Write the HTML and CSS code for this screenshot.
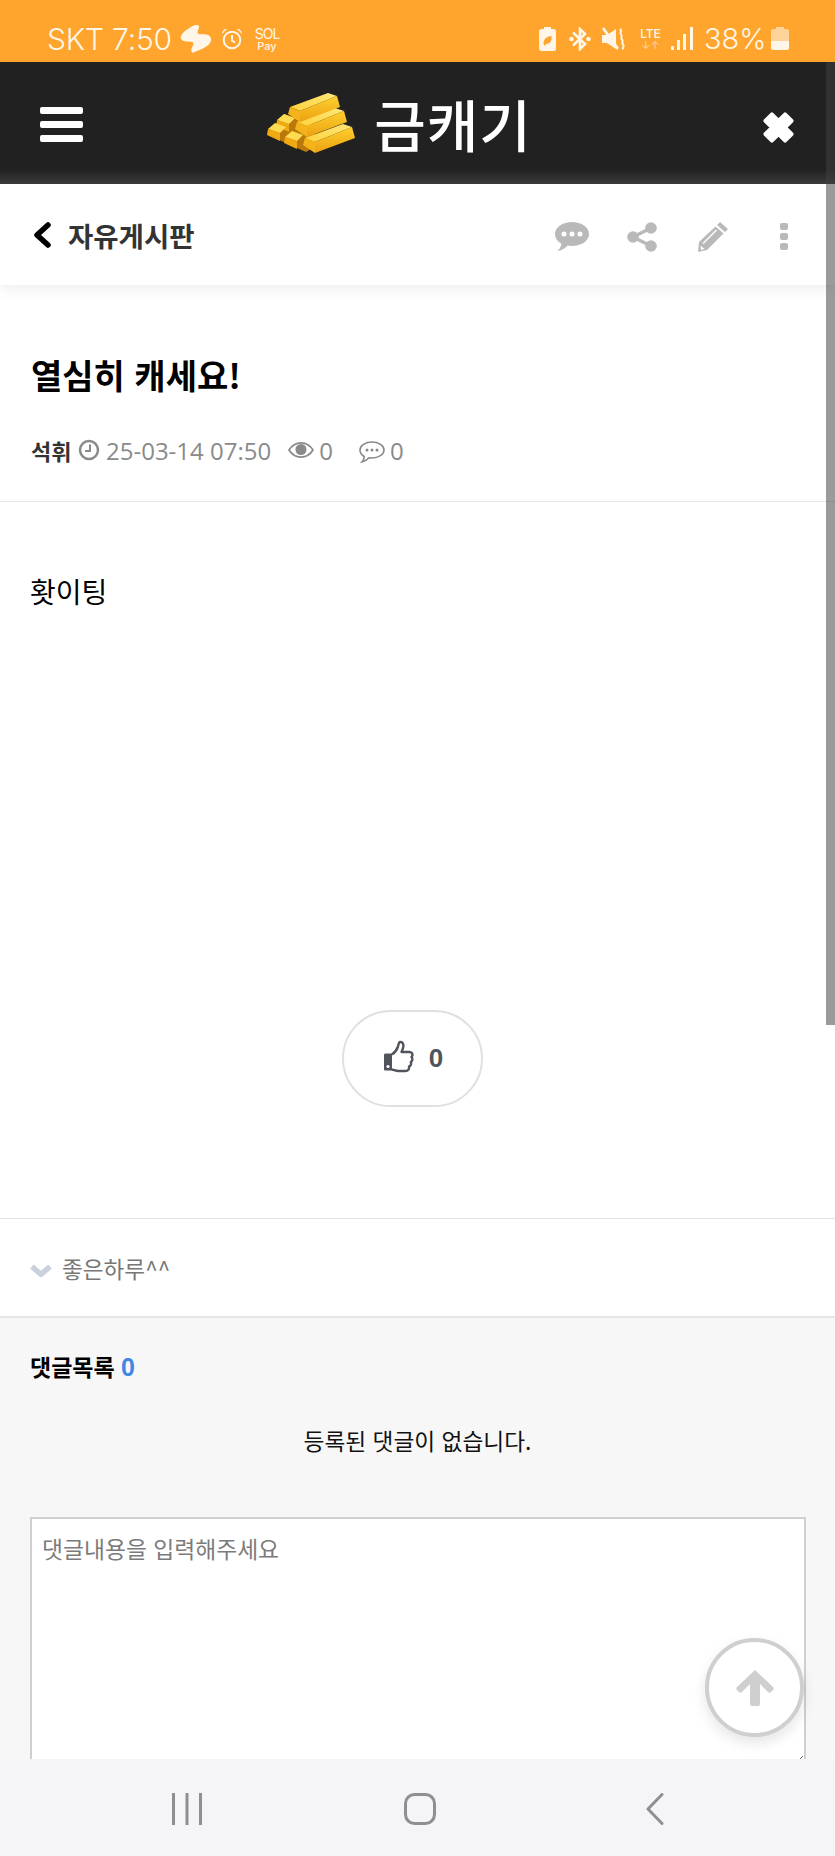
FILE: index.html
```html
<!DOCTYPE html>
<html lang="ko">
<head>
<meta charset="utf-8">
<title>금캐기</title>
<link rel="stylesheet" href="styles.css">
</head>
<body>
<div class="screen">
  <div class="statusbar">
    <div class="status-left">
      <span class="clock">SKT 7:50</span>
      <svg class="ic-swoosh" viewBox="0 0 32 28"><path fill="#fff6e8" d="M15 0C11 2 3 6 1 11c-1 3 1 5 5 5.500 3 .3 6 0 7 1 1 1 0 3-1 5-1 1.500-1 4 0 5 1 .5 3-.5 5-1.500 5-2 13-5 14-10.500.5-3-1-5.500-5-6-3-.4-6 .2-7.500-.5-1.500-1-1-3 0-5 1-2 .5-4-1.500-4.500z"/></svg>
      <svg class="ic-alarm" viewBox="0 0 22 22"><circle cx="11" cy="12" r="8.300" fill="none" stroke="#fff6e8" stroke-width="2"/><path fill="none" stroke="#fff6e8" stroke-width="2" d="M11 7v5.500l3 2"/><path fill="#fff6e8" d="M1 6c0-3 2-5 5-5zM21 6c0-3-2-5-5-5z"/></svg>
      <span class="solpay"><span class="sol">SOL</span><span class="pay">Pay</span></span>
    </div>
    <div class="status-right">
      <svg class="ic-batsave" viewBox="0 0 17 24"><path fill="#fff6e8" d="M5 0h7v2h2.500A2.500 2.500 0 0 1 17 4.500v17a2.500 2.500 0 0 1-2.500 2.500h-12A2.500 2.500 0 0 1 0 21.500v-17A2.500 2.500 0 0 1 2.500 2H5z"/><path fill="#ffa52d" d="M4.500 17c0-5 3-7.500 8-8 .5 5-1.500 8-5.500 8l-1 2zM7 15c1-2 2-3 3.500-3.500C9 12 8 13.500 7 15z"/></svg>
      <svg class="ic-bt" viewBox="0 0 22 24"><path fill="none" stroke="#fff6e8" stroke-width="2.600" d="M4 5.500l12 11.500-5 5V2l5 5L4 18.500"/><circle cx="2.500" cy="12" r="2.300" fill="#fff6e8"/><circle cx="19.500" cy="12" r="2.300" fill="#fff6e8"/></svg>
      <svg class="ic-mute" viewBox="0 0 24 24"><path fill="#fff6e8" d="M0 8h5L14 2v20l-9-6H0zM0 2l2-2 15 21-2 2z"/><path fill="none" stroke="#fff6e8" stroke-width="2" d="M18 2c3 2-1 3 1 5.500s-1 3 1 5-1 3 1 5-1 3 0 5"/></svg>
      <span class="lte"><span class="lte-t">LTE</span><span class="lte-a">↓↑</span></span>
      <svg class="ic-signal" viewBox="0 0 22 24"><path fill="#fff6e8" d="M0 19h3v4H0zM6 13h3v10H6zM12 7h3v16h-3zM19 0h3v23h-3z"/></svg>
      <span class="pct">38%</span>
      <svg class="ic-batt" viewBox="0 0 18 23"><path fill="#ffd49a" d="M5 0h8v2h2.500A2.500 2.500 0 0 1 18 4.500V14H0V4.500A2.500 2.500 0 0 1 2.500 2H5z"/><path fill="#fff6e8" d="M0 14h18v6.500a2.500 2.500 0 0 1-2.500 2.500h-13A2.500 2.500 0 0 1 0 20.500z"/></svg>
    </div>
  </div>

  <header class="topbar">
    <div class="burger"><i></i><i></i><i></i></div>
    <div class="brand">
      <svg class="gold" viewBox="266 92 90 64">
        <defs>
          <linearGradient id="gt" x1="0" y1="1" x2="1" y2="0"><stop offset="0" stop-color="#ffd23a"/><stop offset="1" stop-color="#ffe77a"/></linearGradient>
          <linearGradient id="gf" x1="0" y1="0" x2="0" y2="1"><stop offset="0" stop-color="#ffd02f"/><stop offset="1" stop-color="#eba111"/></linearGradient>
          <g id="bar">
            <path fill="url(#gt)" d="M290 108l38-14 9 3-37 15z"/>
            <path fill="url(#gf)" d="M300 112l37-15 3 11-40 15z"/>
            <path fill="#f5b31b" d="M290 108l10 4v11l-12-8z"/>
          </g>
          <g id="stub">
            <path fill="#ffdb52" d="M277 121l7-6 11 4-6 6z"/>
            <path fill="#f0a912" d="M277 121l12 4v8l-13-6z"/>
          </g>
        </defs>
        <path fill="#b8790a" d="M268 136 284 115l30 10 2 22-10 6z"/>
        <use href="#stub"/>
        <use href="#stub" transform="translate(-9 9)"/>
        <use href="#stub" transform="translate(8 17)"/>
        <use href="#bar" transform="translate(7 15)"/>
        <use href="#bar" transform="translate(15 31)"/>
        <use href="#bar"/>
      </svg>
      <span class="brand-name">금캐기</span>
    </div>
    <svg class="close" viewBox="0 0 30 30"><path fill="#fff" d="M3 9 9 3l6 6 6-6 6 6-6 6 6 6-6 6-6-6-6 6-6-6 6-6z" stroke="#fff" stroke-width="3.500" stroke-linejoin="round"/></svg>
  </header>

  <nav class="subnav">
    <div class="back">
      <svg class="ic-back" viewBox="0 0 18 26"><path fill="none" stroke="#000" stroke-width="5.500" stroke-linecap="round" stroke-linejoin="round" d="M15 3 4 13l11 10"/></svg>
      <span class="back-label">자유게시판</span>
    </div>
    <div class="tools">
      <svg class="ic-chat" viewBox="0 0 34 29"><path fill="#b9b9b9" d="M17 0c9.400 0 17 5 17 12s-7.600 12-17 12c-1.500 0-3-.1-4.300-.4C10.500 26 6.500 29 2 29c3-2 4-4.500 4.300-7.500C2.500 19.500 0 16 0 12 0 5 7.600 0 17 0z"/><circle cx="9" cy="12" r="2.500" fill="#fff"/><circle cx="17" cy="12" r="2.500" fill="#fff"/><circle cx="25" cy="12" r="2.500" fill="#fff"/></svg>
      <svg class="ic-share" viewBox="0 0 30 30"><path fill="none" stroke="#b9b9b9" stroke-width="3.500" d="M24 6 6 15l18 9"/><circle cx="24" cy="6" r="5.800" fill="#b9b9b9"/><circle cx="6" cy="15" r="5.800" fill="#b9b9b9"/><circle cx="24" cy="24" r="5.800" fill="#b9b9b9"/></svg>
      <svg class="ic-pencil" viewBox="0 0 30 30"><path fill="#b9b9b9" d="M22 0l8 7-3 3-8-7zM17.500 4.500l8 7L9 28 0 30l1-10z"/><path fill="none" stroke="#fff" stroke-width="1.500" d="M18.500 8 5 21.500"/><path fill="#fff" d="M2.500 23.500l4 3.500-3.500 1z"/></svg>
      <div class="kebab"><i></i><i></i><i></i></div>
    </div>
  </nav>

  <main class="post">
    <section class="post-head">
      <h1 class="post-title">열심히 캐세요!</h1>
      <div class="meta">
        <strong class="author">석휘</strong>
        <span class="meta-item date">
          <svg class="ic-clock" viewBox="0 0 22 22"><circle cx="11" cy="11" r="9" fill="none" stroke="#8a8a8a" stroke-width="2.500"/><path fill="none" stroke="#8a8a8a" stroke-width="2" d="M12 5.500V12H7"/></svg>25-03-14 07:50</span>
        <span class="meta-item views">
          <svg class="ic-eye" viewBox="0 0 26 18"><path fill="none" stroke="#8a8a8a" stroke-width="1.800" d="M1 9c6-9.500 18-9.500 24 0-6 9.500-18 9.500-24 0z"/><circle cx="13" cy="8.500" r="5.500" fill="#8a8a8a"/></svg>0</span>
        <span class="meta-item comments">
          <svg class="ic-cmt" viewBox="0 0 26 22"><path fill="none" stroke="#8a8a8a" stroke-width="1.600" d="M13 1c6.600 0 12 3.500 12 8s-5.400 8-12 8l-3-.2C8.500 18.500 6 20.500 3 21c1.500-1.500 2.200-3.500 2.200-5.500C2.600 14 1 11.600 1 9c0-4.500 5.400-8 12-8z"/><circle cx="8" cy="9" r="1.500" fill="#8a8a8a"/><circle cx="13" cy="9" r="1.500" fill="#8a8a8a"/><circle cx="18" cy="9" r="1.500" fill="#8a8a8a"/></svg>0</span>
      </div>
    </section>

    <section class="post-body">
      <p class="post-text">홧이팅</p>
      <div class="like-wrap">
        <button class="like" type="button">
          <svg class="ic-thumb" viewBox="0 0 30 32"><path fill="#50555c" d="M0 14.500c0-1 .8-1.500 1.500-1.500H8v17H1.500C.8 30 0 29.500 0 28.500z"/><circle cx="4" cy="26" r="1.600" fill="#fff"/><path fill="none" stroke="#50555c" stroke-width="2.400" stroke-linejoin="round" d="M8 14c3-2 5-5 6-8 .5-2 .5-4 2-4.500 3-.5 4 3 3 6-.5 2-1.500 4-1.500 4h8c3 0 3.800 3 2 5 1.500 2 1 4-.7 5 .8 2 0 4-1.800 4.500.5 2.500-1 4.500-3.500 4.500h-7c-3 0-5-1.500-7-1.500"/></svg>
          <span class="like-n">0</span>
        </button>
      </div>
    </section>

    <section class="prev-row">
      <svg class="ic-down" viewBox="0 0 22 14"><path fill="none" stroke="#c9d1dd" stroke-width="5.500" stroke-linejoin="round" d="M2 2.500 11 10.500 20 2.500"/></svg>
      <span class="prev-label">좋은하루^^</span>
    </section>

    <section class="comments-sec">
      <h2 class="cm-title">댓글목록 <em class="cm-count">0</em></h2>
      <p class="cm-empty">등록된 댓글이 없습니다.</p>
      <textarea class="cm-input" placeholder="댓글내용을 입력해주세요"></textarea>
    </section>
  </main>

  <div class="scroll-thumb"></div>

  <button class="to-top" type="button" aria-label="맨 위로">
    <svg viewBox="0 0 38 36"><path fill="#cfcfcf" d="M19 0 37 17c1 1 1 2 0 3l-2 2c-1 1-2 1-3 0l-8-8v20c0 1-1 2-2 2h-6c-1 0-2-1-2-2V14l-8 8c-1 1-2 1-3 0l-2-2c-1-1-1-2 0-3z"/></svg>
  </button>

  <div class="navbar">
    <svg class="nav-recent" viewBox="0 0 30 32"><path fill="none" stroke="#8f8f92" stroke-width="3" d="M1.500 0v32M15 0v32M28.500 0v32"/></svg>
    <svg class="nav-home" viewBox="0 0 32 32"><rect x="1.500" y="1.500" width="29" height="29" rx="9" fill="none" stroke="#8f8f92" stroke-width="3"/></svg>
    <svg class="nav-back" viewBox="0 0 18 32"><path fill="none" stroke="#8f8f92" stroke-width="3" stroke-linecap="round" stroke-linejoin="round" d="M16 1.500 2 16l14 14.500"/></svg>
  </div>
</div>
</body>
</html>
```

FILE: styles.css
```css
* { box-sizing: border-box; }
html, body { margin: 0; padding: 0; background: #fff; }
body { font-family: "Noto Sans CJK KR", "Noto Sans", sans-serif; color: #000; }
.screen { position: relative; width: 835px; height: 1856px; overflow: hidden; background: #fff; }

/* status bar */
.statusbar { height: 62px; background: #ffa52d; color: #fff6e8; display: flex; justify-content: space-between; align-items: center; padding: 15px 46px 0 47px; font-family: Inter, Roboto, sans-serif; }
.status-left, .status-right { display: flex; align-items: center; }
.clock { font-size: 30px; font-weight: 300; letter-spacing: -.2px; line-height: 34px; width: 133px; }
.ic-swoosh { width: 32px; height: 28px; }
.ic-alarm { width: 22px; height: 22px; margin-left: 9px; }
.solpay { display: flex; flex-direction: column; align-items: center; margin-left: 11px; width: 26px; line-height: 1; }
.sol { font-size: 14px; line-height: 15px; letter-spacing: -1px; }
.pay { font-size: 11px; line-height: 11px; font-weight: 500; }
.ic-batsave { width: 17px; height: 24px; }
.ic-bt { width: 22px; height: 24px; margin-left: 13px; }
.ic-mute { width: 24px; height: 24px; margin-left: 11px; }
.lte { display: flex; flex-direction: column; align-items: center; width: 25px; margin-left: 12px; line-height: 1; }
.lte-t { font-size: 12px; font-weight: 500; line-height: 13px; }
.lte-a { font-size: 11px; line-height: 11px; color: #ffd49a; }
.ic-signal { width: 22px; height: 24px; margin-left: 8px; }
.pct { font-size: 29px; font-weight: 300; line-height: 34px; margin-left: 11px; width: 67px; }
.ic-batt { width: 18px; height: 23px; }

/* top bar */
.topbar { height: 122px; background: linear-gradient(#212121 calc(100% - 14px), #3d3d3d); display: flex; align-items: center; justify-content: space-between; padding: 3px 42px 0 40px; }
.burger { width: 43px; display: flex; flex-direction: column; gap: 7px; }
.burger i { display: block; height: 7px; border-radius: 2px; background: #fff; }
.brand { display: flex; align-items: center; gap: 18px; margin-right: 47px; margin-bottom: 3px; }
.gold { width: 90px; height: 64px; }
.brand-name { color: #fff; font-size: 56px; font-weight: 500; line-height: 64px; letter-spacing: 1px; }
.close { width: 33px; height: 33px; margin: 6px -2px 0 0; }

/* sub nav */
.subnav { position: relative; height: 101px; background: #fff; display: flex; align-items: center; justify-content: space-between; padding: 0 47px 0 33px; box-shadow: 0 4px 14px rgba(0, 0, 0, .07); }
.back { display: flex; align-items: center; gap: 17px; }
.ic-back { width: 18px; height: 26px; }
.back-label { font-size: 27.500px; font-weight: 700; color: #333; line-height: 36px; }
.tools { display: flex; align-items: center; padding-top: 4px; }
.ic-chat { width: 34px; height: 29px; }
.ic-share { width: 30px; height: 30px; margin-left: 38px; }
.ic-pencil { width: 30px; height: 30px; margin-left: 41px; }
.kebab { display: flex; flex-direction: column; gap: 3px; margin-left: 52px; }
.kebab i { display: block; width: 8px; height: 7px; border-radius: 2px; background: #b9b9b9; }

/* post */
.post-head { height: 217px; padding: 65px 31px 0; border-bottom: 1px solid #e6e6e6; }
.post-title { margin: 0; font-size: 34px; font-weight: 700; line-height: 50px; }
.meta { display: flex; align-items: center; margin-top: 33px; height: 34px; font-family: "Open Sans", sans-serif; font-size: 24px; color: #8a8a8a; }
.author { font-family: "Noto Sans CJK KR", sans-serif; font-size: 22px; color: #333; font-weight: 700; width: 47px; }
.meta-item { display: flex; align-items: center; }
.ic-clock { width: 22px; height: 22px; margin-right: 6px; }
.views { margin-left: 17px; }
.ic-eye { width: 26px; height: 18px; margin-right: 5px; }
.comments { margin-left: 26px; }
.ic-cmt { width: 26px; height: 22px; margin: 4px 5px 0 0; }

.post-body { height: 717px; padding: 62px 30px 0; border-bottom: 1px solid #e2e2e2; }
.post-text { margin: 0; font-size: 28px; line-height: 54px; }
.like-wrap { display: flex; justify-content: center; margin-top: 392px; padding-right: 10px; }
.like { width: 141px; height: 97px; border-radius: 49px; border: 2px solid #e0e0e0; background: #fff; display: flex; align-items: center; justify-content: center; gap: 15px; padding: 0 0 0 2px; font-family: "Liberation Sans", sans-serif; }
.ic-thumb { width: 30px; height: 33px; margin-bottom: 4px; }
.like-n { font-size: 26px; font-weight: 700; color: #50555c; }

.prev-row { height: 99px; display: flex; align-items: center; padding: 0 30px; border-bottom: 2px solid #e6e6e6; }
.ic-down { width: 22px; height: 14px; margin: 6px 10px 0 0; }
.prev-label { font-size: 22.600px; color: #777; line-height: 36px; margin-top: 2px; }

.comments-sec { background: #f7f7f8; height: 560px; padding: 28px 30px 0; }
.cm-title { margin: 0; font-size: 23px; font-weight: 700; line-height: 40px; }
.cm-count { font-style: normal; color: #3f87e5; font-family: "Liberation Sans", sans-serif; font-size: 25px; }
.cm-empty { margin: 36px 0 0; text-align: center; font-size: 22.700px; line-height: 36px; color: #111; }
.cm-input { display: block; width: 776px; height: 249px; margin-top: 58px; padding: 13px 10px; border: 2px solid #cfcfd4; border-radius: 0; background: #fff; font-family: "Noto Sans CJK KR", sans-serif; font-size: 22.800px; line-height: 34px; }
.cm-input::placeholder { color: #7b7b7b; opacity: 1; }

/* overlays */
.scroll-thumb { position: absolute; top: 62px; right: 0; width: 9px; height: 963px; background: rgba(64, 64, 70, .53); }
.to-top { position: absolute; left: 705px; top: 1638px; width: 99px; height: 99px; border-radius: 50%; border: 4px solid #cfcfcf; background: #fff; box-shadow: 0 6px 14px rgba(0, 0, 0, .1); padding: 0; display: flex; align-items: center; justify-content: center; }
.to-top svg { width: 38px; height: 36px; }
.navbar { position: absolute; left: 0; right: 0; bottom: 0; height: 97px; background: #f5f5f7; }
.nav-recent { position: absolute; left: 172px; top: 34px; width: 30px; height: 32px; }
.nav-home { position: absolute; left: 404px; top: 34px; width: 32px; height: 32px; }
.nav-back { position: absolute; left: 646px; top: 34px; width: 18px; height: 32px; }
```
